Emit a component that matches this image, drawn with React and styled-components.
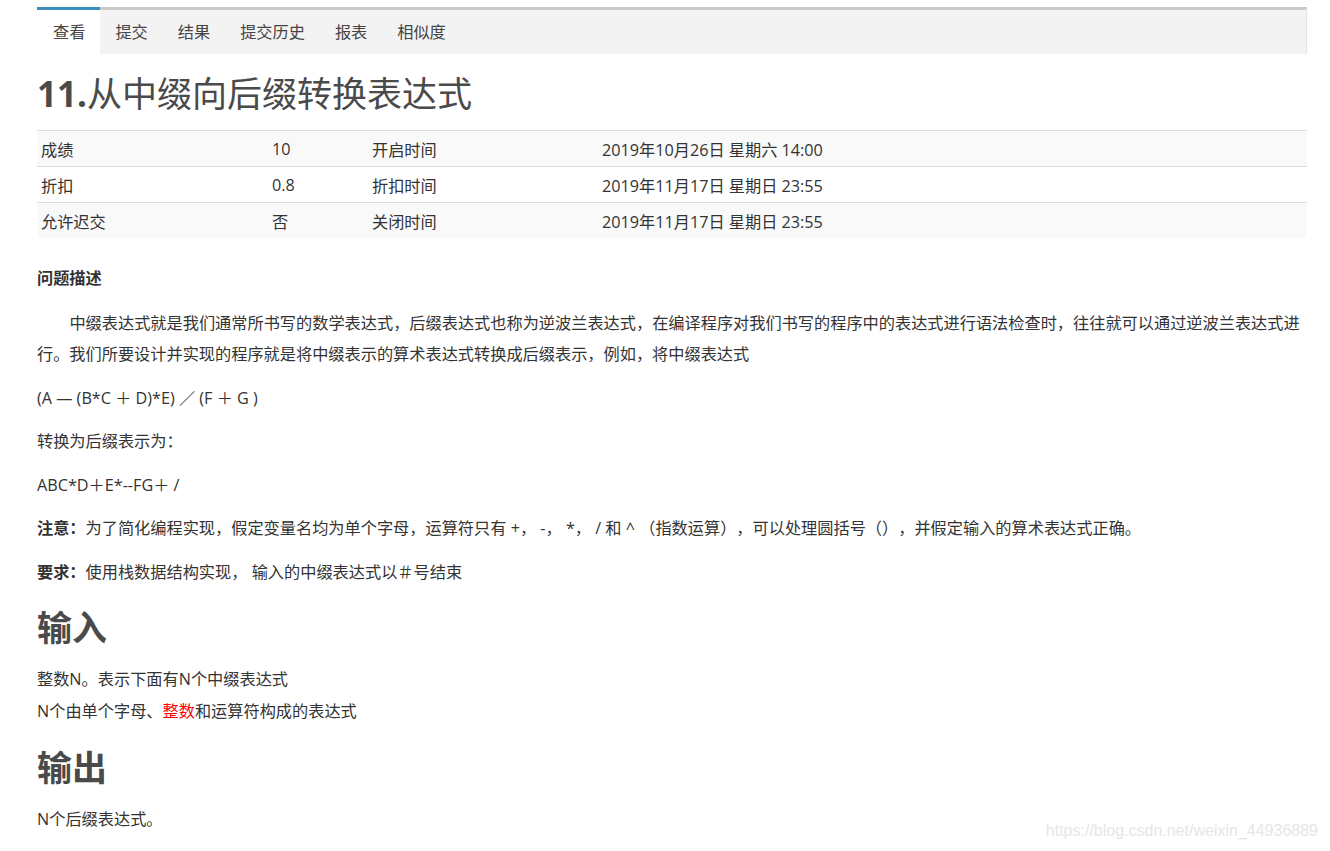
import React from 'react'
import styled, { createGlobalStyle } from 'styled-components'

const GlobalStyle = createGlobalStyle`
    body {
        margin: 0;
        background: #fff;
        font-family: "Open Sans", "Noto Sans CJK SC", sans-serif;
        color: #333;
        text-spacing-trim: space-all;
    }
`

const tabs = ['查看', '提交', '结果', '提交历史', '报表', '相似度']

const infoRows = [
    ['成绩', '10', '开启时间', '2019年10月26日 星期六 14:00'],
    ['折扣', '0.8', '折扣时间', '2019年11月17日 星期日 23:55'],
    ['允许迟交', '否', '关闭时间', '2019年11月17日 星期日 23:55'],
]

const App = () => {
    return (
        <Page>
            <GlobalStyle />
            <TabBar>
                {tabs.map((tab, i) => (
                    <Tab key={tab} active={i === 0}>{tab}</Tab>
                ))}
            </TabBar>

            <Title><b>11.</b>从中缀向后缀转换表达式</Title>

            <InfoTable>
                {infoRows.map((row, i) => (
                    <InfoRow key={row[0]} striped={i % 2 === 0}>
                        {row.map((cell) => (
                            <Cell key={cell}>{cell}</Cell>
                        ))}
                    </InfoRow>
                ))}
            </InfoTable>

            <SubTitle>问题描述</SubTitle>
            <Para indent>
                中缀表达式就是我们通常所书写的数学表达式，后缀表达式也称为逆波兰表达式，在编译程序对我们书写的程序中的表达式进行语法检查时，往往就可以通过逆波兰表达式进行。我们所要设计并实现的程序就是将中缀表示的算术表达式转换成后缀表示，例如，将中缀表达式
            </Para>
            <Para>(A — (B*C ＋ D)*E) ／ (F ＋ G )</Para>
            <Para>转换为后缀表示为：</Para>
            <Para>ABC*D＋E*--FG＋ /</Para>
            <Para>
                <b>注意：</b>为了简化编程实现，假定变量名均为单个字母，运算符只有 +， -， *， / 和 ^ （指数运算），可以处理圆括号（），并假定输入的算术表达式正确。
            </Para>
            <Para>
                <b>要求：</b>使用栈数据结构实现， 输入的中缀表达式以＃号结束
            </Para>

            <Heading>输入</Heading>
            <Lines>
                <div>整数N。表示下面有N个中缀表达式</div>
                <div>N个由单个字母、<Red>整数</Red>和运算符构成的表达式</div>
            </Lines>

            <Heading>输出</Heading>
            <Lines>
                <div>N个后缀表达式。</div>
            </Lines>

            <Watermark>https://blog.csdn.net/weixin_44936889</Watermark>
        </Page>
    )
}

const Page = styled.div`
    width: 1270px;
    margin-left: 37px;
    padding-top: 7px;
    font-size: 16.2px;
`

const TabBar = styled.div`
    display: flex;
    background: #f3f3f3;
    border-top: 3px solid #c9c9c9;
    border-left: 1px solid #e2e2e2;
    border-right: 1px solid #e2e2e2;
    height: 44px;
`

const Tab = styled.div`
    padding: 0 15px;
    line-height: 44px;
    font-size: 16.2px;
    color: #444;
    cursor: pointer;
    background: ${(p) => (p.active ? '#fff' : 'transparent')};
    ${(p) => p.active && `
        margin: -3px 0 0 -1px;
        border-top: 3px solid #3c8dbc;
        padding-left: 16px;
    `}
`

const Title = styled.h1`
    margin: 20px 0 16px;
    font-size: 35px;
    line-height: 40px;
    font-weight: normal;
    color: #4a4a4a;

    b {
        font-weight: bold;
    }
`

const InfoTable = styled.div`
    display: flex;
    flex-direction: column;
`

const InfoRow = styled.div`
    display: grid;
    grid-template-columns: 231px 100px 230px 1fr;
    height: 35px;
    align-items: center;
    border-top: 1px solid #ddd;
    background: ${(p) => (p.striped ? '#f9f9f9' : '#fff')};
`

const Cell = styled.div`
    padding: 0 4px;
    color: #333;
`

const SubTitle = styled.div`
    margin: 25px 0 14px;
    font-weight: bold;
    line-height: 31px;
`

const Para = styled.p`
    margin: 0 0 12.5px;
    line-height: 31px;
    text-indent: ${(p) => (p.indent ? '2em' : '0')};
`

const Heading = styled.h2`
    margin: 20.5px 0 15px;
    font-size: 35px;
    line-height: 40px;
    font-weight: bold;
    color: #4a4a4a;
`

const Lines = styled.div`
    line-height: 32px;
    margin-bottom: 18px;
`

const Red = styled.span`
    color: #f00;
`

const Watermark = styled.div`
    position: absolute;
    top: 822px;
    right: 12px;
    font-family: "Liberation Sans", Arial, sans-serif;
    font-size: 16px;
    color: #e6e6e6;
`

export default App
